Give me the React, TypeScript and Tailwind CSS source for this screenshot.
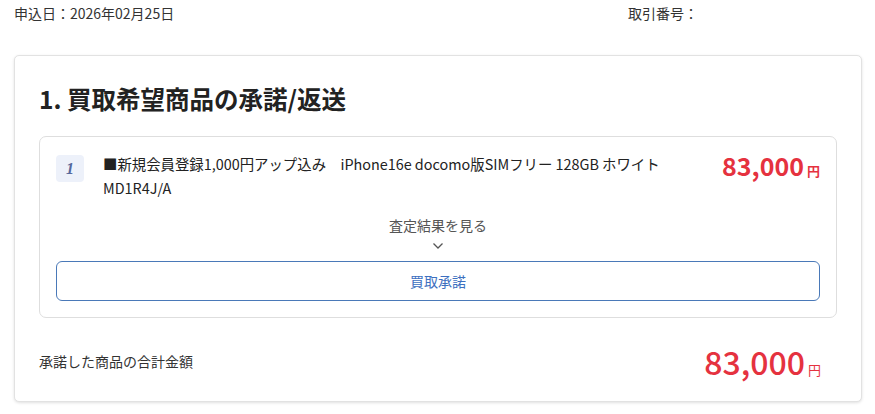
import React from "react";

export default function App() {
  return (
    <div
      className="w-[875px] h-[414px] bg-white text-[#333] overflow-hidden"
      style={{ fontFamily: '"Noto Sans CJK JP", "Noto Sans", sans-serif' }}
    >
      <div className="flex h-[26px] items-center px-[14px] text-[14px]">
        <div className="w-[614px]">申込日：2026年02月25日</div>
        <div>取引番号：</div>
      </div>
      <div className="mx-[14px] mt-[29px] w-[848px] h-[347px] rounded-[5px] border border-[#e2e2e2] bg-white shadow-[0_1px_3px_rgba(0,0,0,0.12)] px-[24px] pt-[28px]">
        <h1 className="text-[24.5px] leading-[30px] font-bold text-[#222]">1. 買取希望商品の承諾/返送</h1>
        <div className="mt-[22px] rounded-[7px] border border-[#dedede] px-[16px] pt-[15px] pb-[16px]">
          <div className="flex items-start">
            <div className="w-[28px] h-[27px] mt-[3px] rounded-[4px] bg-[#edf1fa] flex items-center justify-center text-[#56689c] italic font-bold text-[16px]" style={{ fontFamily: '"Liberation Serif", serif' }}>
              1
            </div>
            <div className="ml-[19px] w-[580px] text-[14.4px] leading-[24px] text-[#222]">
              ■新規会員登録1,000円アップ込み　iPhone16e docomo版SIMフリー 128GB ホワイト MD1R4J/A
            </div>
            <div className="ml-auto flex items-baseline text-[#e5323f] -mt-[4px]">
              <span className="text-[25px] font-bold leading-[34px]">83,000</span>
              <span className="ml-[3px] text-[13px] font-bold">円</span>
            </div>
          </div>
          <div className="mt-[15px] flex flex-col items-center text-[14px] leading-[20px] text-[#555]">
            <div>査定結果を見る</div>
            <svg width="12" height="8" viewBox="0 0 12 8" className="mt-[7px]">
              <polyline points="1.5,1.5 6,6 10.5,1.5" fill="none" stroke="#555" strokeWidth="1.3" />
            </svg>
          </div>
          <button className="mt-[11px] w-full h-[40px] rounded-[6px] border border-[#4a79b8] text-[14px] text-[#3d70c0] bg-white">
            買取承諾
          </button>
        </div>
        <div className="mt-[23px] flex items-center">
          <div className="text-[14px] text-[#333]">承諾した商品の合計金額</div>
          <div className="ml-auto mr-[16px] flex items-baseline text-[#e5323f]">
            <span className="text-[32px] font-medium leading-[40px]">83,000</span>
            <span className="ml-[3px] text-[13px]">円</span>
          </div>
        </div>
      </div>
    </div>
  );
}
